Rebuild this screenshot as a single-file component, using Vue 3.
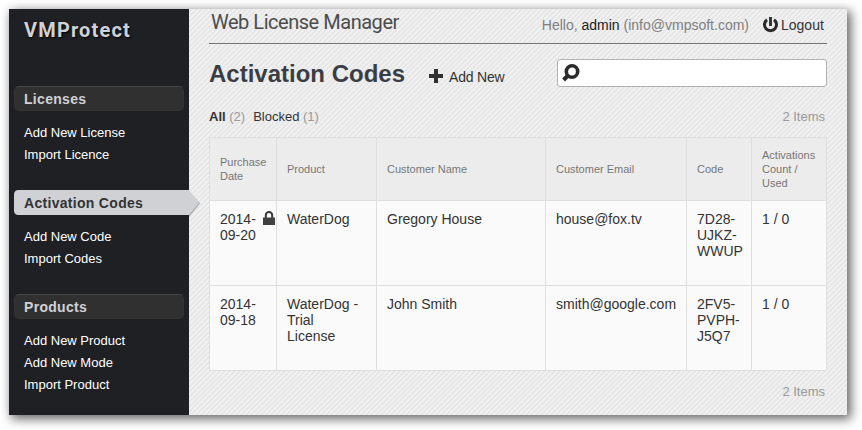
<script setup>
const menu = [
  { title: 'Licenses', items: ['Add New License', 'Import Licence'] },
  { title: 'Activation Codes', active: true, items: ['Add New Code', 'Import Codes'] },
  { title: 'Products', items: ['Add New Product', 'Add New Mode', 'Import Product'] },
]
const columns = [
  ['Purchase', 'Date'],
  ['Product'],
  ['Customer Name'],
  ['Customer Email'],
  ['Code'],
  ['Activations', 'Count /', 'Used'],
]
const rows = [
  { locked: true, cells: [['2014-', '09-20'], ['WaterDog'], ['Gregory House'], ['house@fox.tv'], ['7D28-', 'UJKZ-', 'WWUP'], ['1 / 0']] },
  { locked: false, cells: [['2014-', '09-18'], ['WaterDog -', 'Trial', 'License'], ['John Smith'], ['smith@google.com'], ['2FV5-', 'PVPH-', 'J5Q7'], ['1 / 0']] },
]
</script>

<template>
  <div class="page">
    <div class="window">
      <aside class="sidebar">
        <div class="logo">VMProtect</div>
        <nav>
          <section v-for="group in menu" :key="group.title" class="group">
            <h2 class="group-title" :class="{ active: group.active }">
              <span>{{ group.title }}</span>
              <svg v-if="group.active" class="arrow" width="12" height="27" viewBox="0 0 12 27">
                <path d="M1 1 12 13.500 1 27z" fill="#a9aaae" />
                <path d="M0 0H1L11 13 1 25H0z" fill="#d0d1d5" />
              </svg>
            </h2>
            <a v-for="item in group.items" :key="item" class="link">{{ item }}</a>
          </section>
        </nav>
      </aside>

      <main class="main">
        <header class="topbar">
          <div class="app-name">Web License Manager</div>
          <div class="user">
            <span>Hello, <b>admin</b> (info@vmpsoft.com)</span>
            <svg class="power" width="15" height="16" viewBox="0 0 15 16">
              <path d="M4 2.800A6 6 0 1 0 11 2.800" fill="none" stroke="#292929" stroke-width="3" />
              <path d="M7.500 0v9" stroke="#292929" stroke-width="2.800" />
            </svg>
            <a class="logout">Logout</a>
          </div>
        </header>

        <div class="heading">
          <h1>Activation Codes</h1>
          <a class="add">
            <svg width="14" height="14" viewBox="0 0 14 14"><path d="M5 0h4v5h5v4H9v5H5V9H0V5h5z" fill="#303030" /></svg>
            <span>Add New</span>
          </a>
          <div class="search">
            <svg width="18" height="18" viewBox="0 0 18 18">
              <circle cx="10" cy="7.500" r="5.700" fill="none" stroke="#2b2b2b" stroke-width="3.600" />
              <path d="M6 11.500 1.600 15.900" stroke="#2b2b2b" stroke-width="4.200" />
            </svg>
          </div>
        </div>

        <div class="filters">
          <div><b>All</b> <i class="total">(2)</i><span>Blocked</span> <i>(1)</i></div>
          <span class="count">2 Items</span>
        </div>

        <div class="table">
          <div class="row head">
            <div v-for="(c, i) in columns" :key="i" class="cell"><span v-for="l in c" :key="l" class="line">{{ l }}</span></div>
          </div>
          <div v-for="(r, i) in rows" :key="i" class="row">
            <div v-for="(c, j) in r.cells" :key="j" class="cell">
              <span v-for="l in c" :key="l" class="line">{{ l }}</span>
              <svg v-if="r.locked && j === 0" class="lock" width="12" height="15" viewBox="0 0 12 15">
                <path d="M2.800 7V4.300a3.200 3.200 0 0 1 6.400 0V7" fill="none" stroke="#383838" stroke-width="2" />
                <rect y="6.500" width="12" height="7.500" fill="#404040" />
              </svg>
            </div>
          </div>
        </div>

        <footer class="count bottom">2 Items</footer>
      </main>
    </div>
  </div>
</template>

<style>
body { background: #fff; overflow: hidden; }
</style>

<style scoped>
* { box-sizing: border-box; }
.page { height: 430px; padding: 9px; }
.window {
  display: flex;
  width: 838px;
  height: 406px;
  box-shadow: 3px 3px 10px 1px rgba(0, 0, 0, 0.6);
  font-family: "Liberation Sans", Arial, sans-serif;
  font-size: 14px;
  color: #333;
}
.sidebar { position: relative; width: 180px; background: #1e2024; padding: 0 5px; flex: none; }
.logo {
  height: 77px;
  padding: 9px 0 0 10px;
  font: bold 20px/24px Roboto, sans-serif;
  letter-spacing: 1.15px;
  color: #d0d1d6;
  text-shadow: 1px 1px 2px #000;
}
.group { padding-bottom: 25px; }
.group-title {
  display: flex;
  margin: 0 0 10px;
  height: 25px;
  padding-left: 9px;
  border: 1px solid #343434;
  border-top-color: #454545;
  border-radius: 5px;
  background: #303030;
  font-size: 14px;
  line-height: 24px;
  letter-spacing: 0.3px;
  color: #d0d1d6;
}
.group-title.active {
  position: relative;
  width: 175px;
  border-color: #d0d1d5;
  border-radius: 4px 0 0 4px;
  background: #d0d1d5;
  color: #333;
}
.arrow { position: absolute; left: 173px; top: -1px; }
.link { display: block; height: 22px; padding: 1px 0 0 10px; font-size: 13px; line-height: 22px; color: #fff; }
.main {
  width: 658px;
  padding: 0 20px;
  background: linear-gradient(135deg, #f2f2f2 12.5%, #e7e7e7 12.5% 50%, #f2f2f2 50% 62.5%, #e7e7e7 62.5%) 0 0 / 5px 5px;
}
.topbar { display: flex; justify-content: space-between; height: 35px; border-bottom: 1px solid #747673; }
.app-name { padding-left: 2px; font: 20px/27px Roboto, sans-serif; letter-spacing: -0.47px; color: #4c4c4c; white-space: nowrap; }
.user { display: flex; padding: 8px 2px 0 0; line-height: 16px; color: #808080; white-space: nowrap; }
.user b { font-weight: normal; color: #222; }
.power { margin: 0 3px 0 14px; }
.logout { width: 44px; color: #333; }
.heading { display: flex; height: 62px; padding-top: 15px; }
h1 { margin: 0; width: 220px; font-size: 24px; line-height: 30px; color: #3b3d44; white-space: nowrap; }
.add { display: flex; gap: 6px; width: 128px; padding-top: 10px; line-height: 16px; letter-spacing: -0.2px; }
.search { width: 270px; height: 28px; padding: 4px; border: 1px solid #b0b2b4; border-radius: 3px; background: #fff; }
.filters { display: flex; justify-content: space-between; height: 31px; padding: 3px 2px 0 0; font-size: 13px; line-height: 16px; }
i { font-style: normal; color: #999; }
.total { margin-right: 8px; }
.count { color: #999; font-size: 13px; }
.table { border: 1px solid #dedede; border-bottom: 0; background: #fafafa; }
.row { display: grid; grid-template-columns: 67px 100px 169px 141px 65px 74px; height: 85px; border-bottom: 1px solid #dedede; }
.cell { position: relative; padding: 10px 0 0 10px; border-right: 1px solid #dedede; line-height: 16px; }
.cell:last-child { border-right: 0; }
.line { display: block; white-space: nowrap; }
.head { height: 63px; background: #ececec; }
.head .cell { display: flex; flex-direction: column; justify-content: center; padding-bottom: 1px; padding-top: 0; font-size: 11px; line-height: 14px; color: #777; }
.lock { position: absolute; left: 53px; top: 10px; }
.bottom { padding: 13px 2px 0 0; line-height: 16px; text-align: right; }
</style>
